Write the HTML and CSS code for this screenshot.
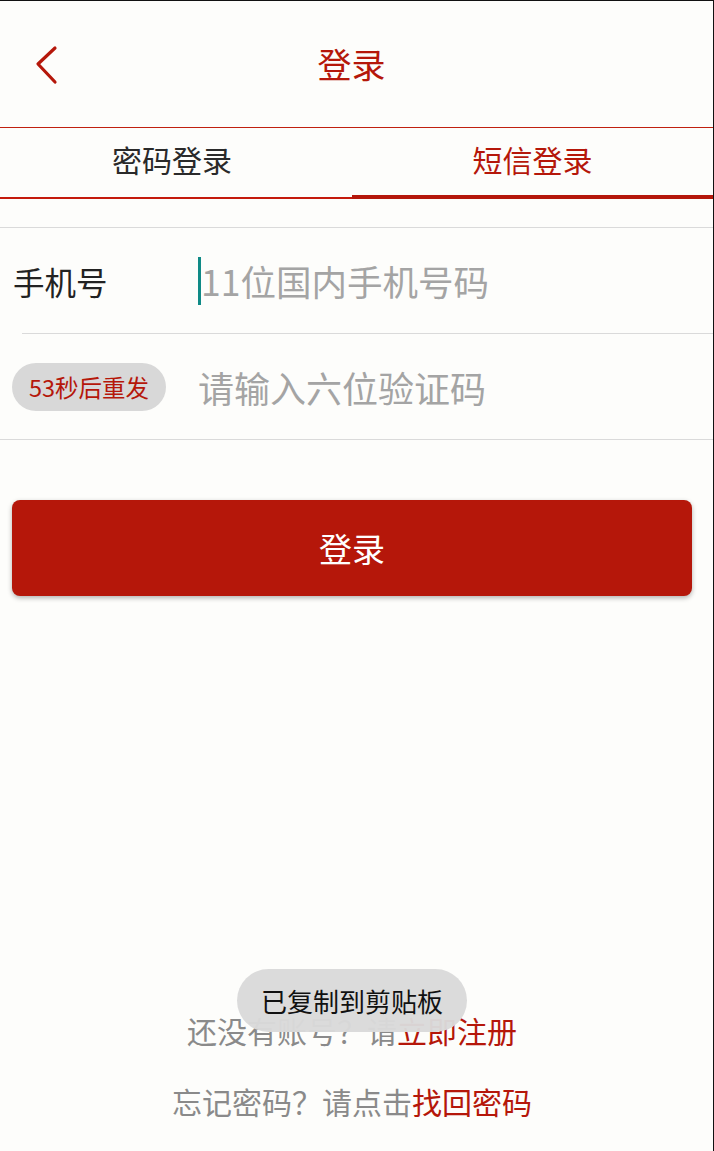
FILE: index.html
```html
<!DOCTYPE html>
<html lang="zh-CN">
<head>
    <meta charset="UTF-8">
    <meta name="viewport" content="width=device-width, initial-scale=1.0">
    <title>登录</title>
    <link rel="stylesheet" href="styles.css">
</head>
<body>

    <!-- Header -->
    <div class="header">
        <a class="back" href="#">
            <svg width="24" height="40" viewBox="0 0 24 40">
                <polyline points="21,3 4,19 21,37" fill="none" stroke="#b5170a" stroke-width="3.2" stroke-linecap="round" stroke-linejoin="round"/>
            </svg>
        </a>
        <h1 class="title">登录</h1>
    </div>

    <!-- Tabs -->
    <div class="tabs">
        <div class="tab">密码登录</div>
        <div class="tab active">短信登录</div>
    </div>

    <!-- Form -->
    <div class="form">
        <div class="row">
            <span class="label">手机号</span>
            <span class="caret"></span>
            <input type="text" class="field" placeholder="11位国内手机号码">
        </div>
        <div class="divider"></div>
        <div class="row">
            <button type="button" class="code-btn">53秒后重发</button>
            <input type="text" class="field code-field" placeholder="请输入六位验证码">
        </div>
    </div>

    <button type="button" class="login-btn">登录</button>

    <!-- Bottom links -->
    <div class="links">
        <p>还没有账号？请<a href="#">立即注册</a></p>
        <p>忘记密码？请点击<a href="#">找回密码</a></p>
    </div>

    <div class="toast">已复制到剪贴板</div>

</body>
</html>
```

FILE: styles.css
```css
* {
    box-sizing: border-box;
}
body {
    margin: 0;
    width: 714px;
    height: 1151px;
    font-family: "Noto Sans CJK SC", "Noto Sans", sans-serif;
    background-color: #fdfdfb;
    border-top: 1px solid #111;
    border-right: 1px solid #111;
    display: flex;
    flex-direction: column;
    position: relative;
    overflow: hidden;
}
.header {
    height: 127px;
    display: flex;
    align-items: center;
    justify-content: center;
    position: relative;
    border-bottom: 1px solid #c0200f;
}
.back {
    position: absolute;
    left: 34px;
    top: 44px;
    display: block;
}
.title {
    margin: 0 10px 0 0;
    font-size: 34px;
    font-weight: normal;
    color: #b5170a;
    line-height: 1;
}
.tabs {
    display: flex;
    height: 71px;
}
.tab {
    width: 352px;
    display: flex;
    align-items: center;
    justify-content: center;
    font-size: 30px;
    color: #2a2a2a;
    border-bottom: 2px solid #c41a0c;
    padding: 0 8px 8px 0;
}
.tab.active {
    flex: 1;
    color: #b5170a;
    border-bottom: 4px solid #b5170a;
    padding: 0 0 6px 0;
}
.form {
    margin-top: 28px;
    border-top: 1px solid #dadada;
    border-bottom: 1px solid #dadada;
}
.row {
    height: 105px;
    display: flex;
    align-items: center;
}
.divider {
    height: 1px;
    margin-left: 22px;
    background: #dadada;
}
.label {
    width: 198px;
    padding-left: 13px;
    font-size: 31.5px;
    color: #222;
}
.caret {
    width: 3px;
    height: 48px;
    background: #0f8a86;
}
.field {
    flex: 1;
    border: none;
    outline: none;
    background: transparent;
    font-family: inherit;
    font-size: 35.5px;
    color: #333;
    padding: 0;
}
.field::placeholder {
    color: #a4a4a4;
}
.code-btn {
    margin-left: 12px;
    width: 154px;
    height: 48px;
    border: none;
    border-radius: 24px;
    background: #d8d8d8;
    color: #b5170a;
    font-family: inherit;
    font-size: 23.5px;
    padding: 0;
}
.code-field {
    margin-left: 32px;
    font-size: 36px;
}
.login-btn {
    margin: 60px 21px 0 12px;
    height: 96px;
    border: none;
    border-radius: 8px;
    background-color: #b5170a;
    color: white;
    font-family: inherit;
    font-size: 33px;
    box-shadow: 0 2px 5px rgba(0, 0, 0, 0.3);
    cursor: pointer;
}
.links {
    margin-top: auto;
    padding: 0 9px 14px 0;
    text-align: center;
    font-size: 30px;
    color: #8a8a8a;
}
.links p {
    margin: 0;
    line-height: 71px;
}
.links a {
    color: #b5170a;
    text-decoration: none;
}
.toast {
    position: absolute;
    left: 237px;
    top: 968px;
    width: 230px;
    height: 63px;
    border-radius: 32px;
    background: rgba(218, 218, 218, 0.97);
    color: #111;
    font-size: 26px;
    display: flex;
    align-items: center;
    justify-content: center;
}
```
